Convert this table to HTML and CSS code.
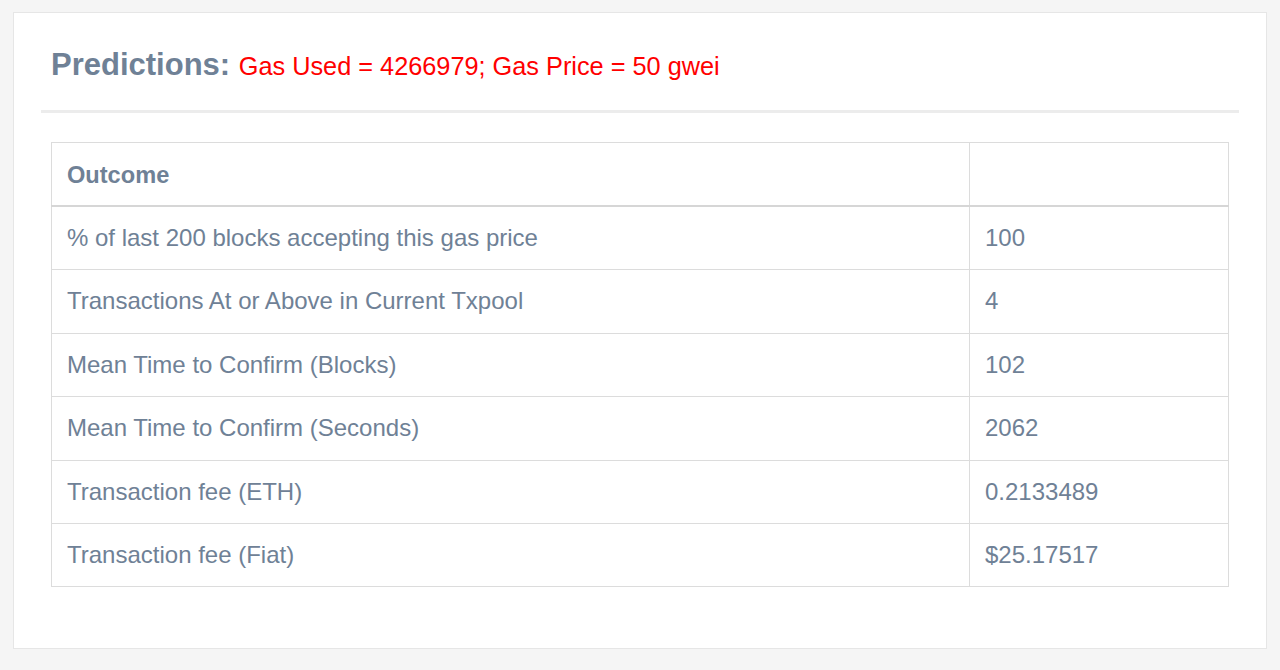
FILE: index.html
```html
<!DOCTYPE html>
<html>
<head>
<meta charset="utf-8">
<link rel="stylesheet" href="styles.css">
</head>
<body>
<div class="card">
  <h2 class="title">Predictions: <span class="params">Gas Used = 4266979; Gas Price = 50 gwei</span></h2>
  <hr class="divider">
  <div class="table-wrap">
    <table class="results">
      <thead>
        <tr><th>Outcome</th><th class="val"></th></tr>
      </thead>
      <tbody>
        <tr><td>% of last 200 blocks accepting this gas price</td><td class="val">100</td></tr>
        <tr><td>Transactions At or Above in Current Txpool</td><td class="val">4</td></tr>
        <tr><td>Mean Time to Confirm (Blocks)</td><td class="val">102</td></tr>
        <tr><td>Mean Time to Confirm (Seconds)</td><td class="val">2062</td></tr>
        <tr><td>Transaction fee (ETH)</td><td class="val">0.2133489</td></tr>
        <tr><td>Transaction fee (Fiat)</td><td class="val">$25.17517</td></tr>
      </tbody>
    </table>
  </div>
</div>
</body>
</html>
```

FILE: styles.css
```css
html, body {
  margin: 0;
  padding: 0;
  background: #f5f5f5;
  font-family: "Liberation Sans", Arial, Helvetica, sans-serif;
  color: #6f8196;
}
body {
  padding: 12px 13px 20px 13px;
}
.card {
  background: #fff;
  border: 1px solid #e6e6e6;
  padding: 30px 27px 62px 27px;
  height: 543px;
}
.title {
  margin: 0 10px;
  font-size: 31px;
  font-weight: bold;
  line-height: 44px;
  color: #6f8196;
}
.params {
  font-size: 25.3px;
  font-weight: normal;
  color: #f00;
}
.divider {
  margin: 22px 0 0 0;
  border: 0;
  height: 3px;
  background: #ececec;
}
.table-wrap {
  padding: 29px 10px 0 10px;
}
.results {
  width: 100%;
  border-collapse: collapse;
  font-size: 24px;
  line-height: 28.4px;
}
.results th, .results td {
  border: 1px solid #dcdcdc;
  padding: 17px 15px;
  text-align: left;
}
.results th {
  font-weight: bold;
  font-size: 23.6px;
  line-height: 28px;
  padding: 18px 15px 16px 15px;
  border-bottom: 2px solid #d6d6d6;
}
.results .val {
  width: 228px;
}
```
